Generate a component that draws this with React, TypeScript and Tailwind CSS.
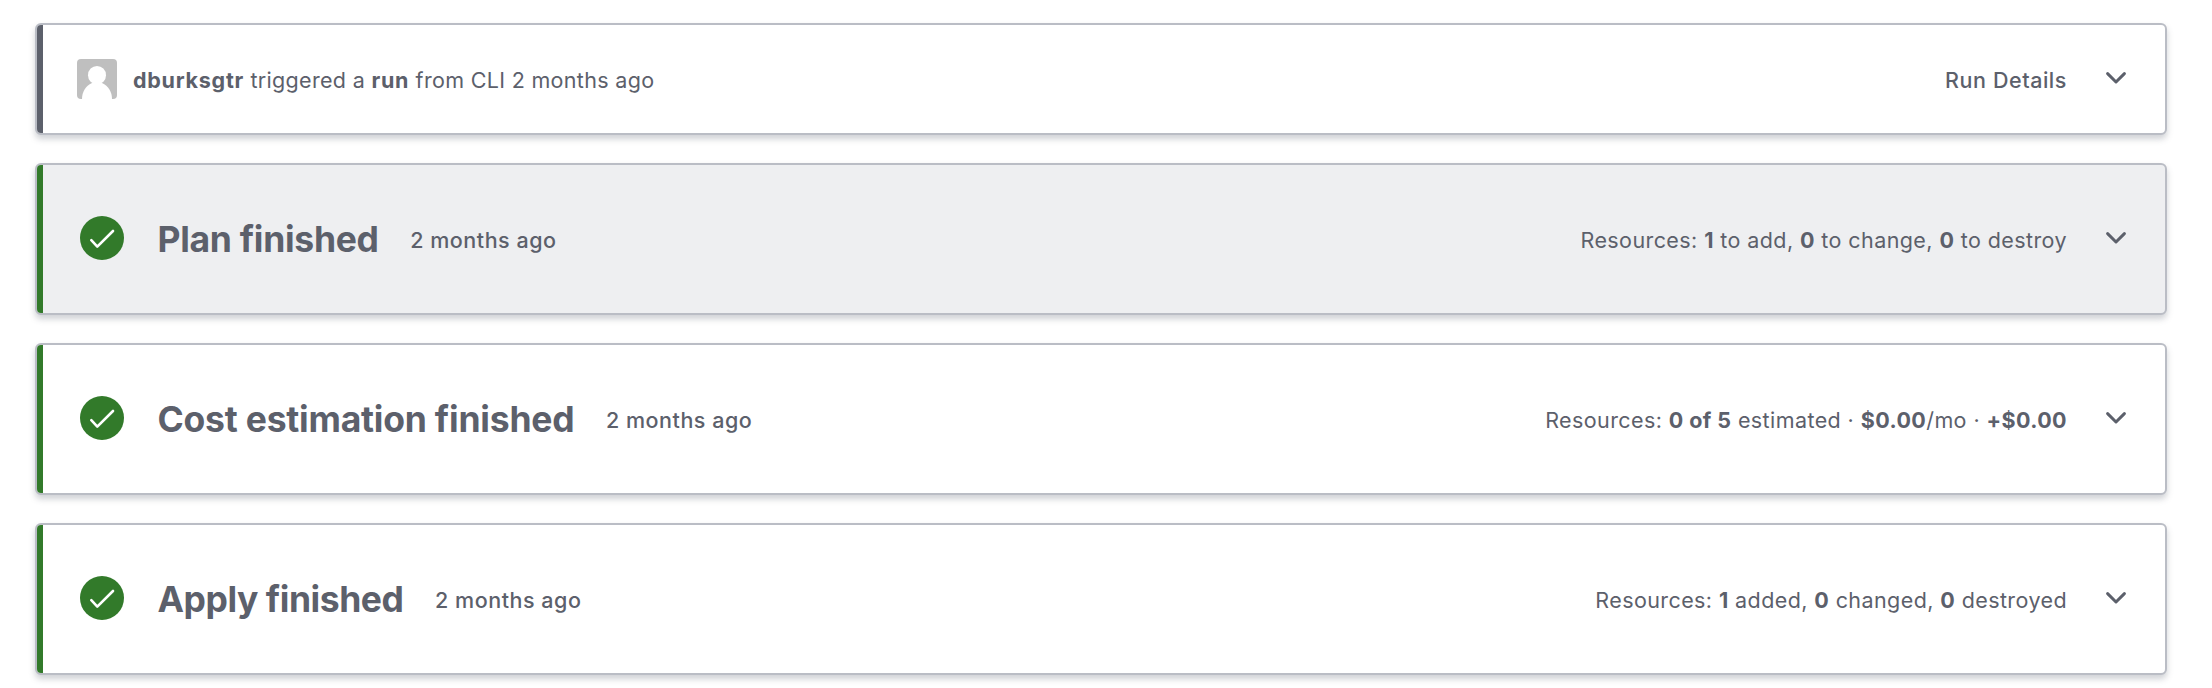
import type { ReactNode } from "react";

function Chevron() {
  return (
    <svg className="mb-0.5 ml-[37px] h-6 w-6 shrink-0" viewBox="0 0 24 24" fill="none" stroke="#5c606b" strokeWidth="3" strokeLinecap="round" strokeLinejoin="round">
      <path d="M3.600 7.600 12 16 20.400 7.600" />
    </svg>
  );
}

function CheckCircle() {
  return (
    <svg className="mb-0.5 h-11 w-11 shrink-0" viewBox="0 0 44 44" fill="none">
      <circle cx="22" cy="22" r="22" fill="#327a2a" />
      <path d="M11.300 24.200 17.300 30.600 33 15" stroke="#fff" strokeWidth="2.6" strokeLinecap="round" strokeLinejoin="round" />
    </svg>
  );
}

function Avatar() {
  return (
    <svg className="h-10 w-10 shrink-0 rounded" viewBox="0 0 40 40">
      <rect width="40" height="40" fill="#bfbfbf" />
      <ellipse cx="20" cy="16.200" rx="9" ry="9.300" fill="#fff" />
      <path d="M5 40C5 33 8.500 27 15 24h10c6.500 3 10 9 10 16z" fill="#fff" />
    </svg>
  );
}

interface StageProps {
  title: string;
  tracking?: string;
  active?: boolean;
  children: ReactNode;
}

function Stage({ title, tracking = "tracking-[-0.220px]", active, children }: StageProps) {
  return (
    <section className={`flex h-[152px] shrink-0 overflow-hidden rounded-md border-2 border-[#babdc5] shadow-[0_4px_6px_rgba(97,104,117,0.3)] ${active ? "bg-[#eeeff1]" : "bg-white"}`}>
      <div className="w-1.5 bg-[#327a2a]" />
      <div className="flex flex-1 items-center pr-[37px] pl-[37px]">
        <CheckCircle />
        <h2 className={`ml-[33.5px] pt-0.5 text-[35.5px] leading-none font-bold ${tracking}`}>{title}</h2>
        <span className="ml-[31.5px] pt-0.5 font-medium tracking-[0.530px]">2 months ago</span>
        <p className="ml-auto pt-0.5 tracking-[0.410px]">{children}</p>
        <Chevron />
      </div>
    </section>
  );
}

export default function App() {
  return (
    <main className="flex h-[688px] w-[2212px] flex-col gap-7 bg-white pt-[23px] pr-[45px] pl-[35px] font-['Inter',sans-serif] text-[21.5px] text-[#5c606b]">
      <section className="flex h-28 shrink-0 overflow-hidden rounded-md border-2 border-[#babdc5] bg-white shadow-[0_4px_6px_rgba(97,104,117,0.3)]">
        <div className="w-1.5 bg-[#5c606b]" />
        <div className="flex flex-1 items-center pr-[37px] pl-[34px]">
          <Avatar />
          <p className="ml-4 pt-0.5 tracking-[0.320px]">
            <b className="tracking-[0.750px]">dburksgtr</b> triggered a <b className="tracking-[0.750px]">run</b> from CLI 2 months ago
          </p>
          <span className="ml-auto pt-0.5 font-medium tracking-[0.560px]">Run Details</span>
          <Chevron />
        </div>
      </section>
      <Stage title="Plan finished" tracking="tracking-[-0.300px]" active>
        Resources: <b>1</b> to add, <b>0</b> to change, <b>0</b> to destroy
      </Stage>
      <Stage title="Cost estimation finished">
        Resources: <b>0 of 5</b> estimated · <b>$0.00</b>/mo · <b>+$0.00</b>
      </Stage>
      <Stage title="Apply finished" tracking="tracking-[-0.450px]">
        Resources: <b>1</b> added, <b>0</b> changed, <b>0</b> destroyed
      </Stage>
    </main>
  );
}
